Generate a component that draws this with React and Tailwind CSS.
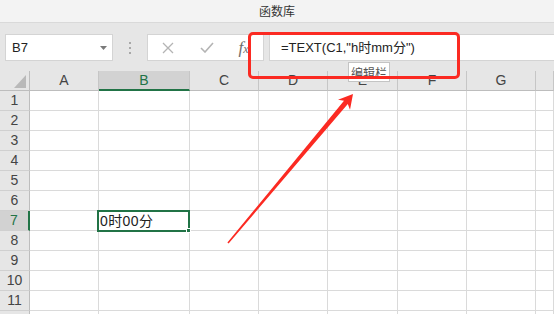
const cols = [
  { name: "A", w: "w-[69px]" },
  { name: "B", w: "w-[91px]" },
  { name: "C", w: "w-[69px]" },
  { name: "D", w: "w-[69px]" },
  { name: "E", w: "w-[70px]" },
  { name: "F", w: "w-[69px]" },
  { name: "G", w: "w-[69px]" },
  { name: "", w: "flex-1" },
];

const rows = [1, 2, 3, 4, 5, 6, 7, 8, 9, 10, 11];

const font = "font-['Liberation_Sans','Noto_Sans_CJK_SC',sans-serif]";

function Toolbar() {
  return (
    <div className="h-[48px] bg-[#e6e6e6] flex items-start pt-[11px] pl-[5px]">
      {/* name box */}
      <div className="w-[108px] h-[27px] bg-white border border-[#d4d4d4] flex items-center justify-between pl-[6px] pr-[5px]">
        <span className="text-[13px] text-[#222]">B7</span>
        <svg width="7" height="4" viewBox="0 0 7 4">
          <path d="M0 0 L7 0 L3.5 4 Z" fill="#7a7a7a" />
        </svg>
      </div>
      <div className="w-[34px] h-[27px] flex flex-col items-center justify-center gap-[3px]">
        <div className="w-[2px] h-[2px] bg-[#a8a8a8]" />
        <div className="w-[2px] h-[2px] bg-[#a8a8a8]" />
        <div className="w-[2px] h-[2px] bg-[#a8a8a8]" />
      </div>
      {/* cancel / enter / fx */}
      <div className="w-[117px] h-[27px] bg-white border border-[#d4d4d4] flex items-center">
        <div className="w-[40px] flex justify-center">
          <svg width="12" height="12" viewBox="0 0 12 12">
            <path d="M1 1 L11 11 M11 1 L1 11" stroke="#b4b4b4" strokeWidth="1.3" />
          </svg>
        </div>
        <div className="w-[38px] flex justify-center">
          <svg width="14" height="11" viewBox="0 0 14 11">
            <path d="M1 6 L5 10 L13 1" stroke="#b4b4b4" strokeWidth="1.6" fill="none" />
          </svg>
        </div>
        <div className="flex-1 flex justify-center pr-[2px]">
          <span className="font-['Liberation_Serif',serif] italic text-[17px] text-[#6e6e6e] leading-none">
            f<span className="text-[12px]">x</span>
          </span>
        </div>
      </div>
      {/* formula input */}
      <div className="ml-[5px] flex-1 h-[27px] bg-white border border-r-0 border-[#d4d4d4] flex items-center pl-[11px]">
        <span className="text-[13px] text-[#222]">=TEXT(C1,"h时mm分")</span>
      </div>
    </div>
  );
}

function HeaderRow() {
  return (
    <div className="flex h-[20px]">
      <div className="w-[30px] shrink-0 bg-[#e6e6e6] border-r border-b border-[#bdbdbd] flex items-end justify-end pr-[3px] pb-[2px]">
        <svg width="12" height="13" viewBox="0 0 12 13">
          <path d="M12 0 L12 13 L0 13 Z" fill="#b9b9b9" />
        </svg>
      </div>
      {cols.map((c) => {
        const sel = c.name === "B";
        return (
          <div
            key={c.name || "h"}
            className={
              c.w +
              " shrink-0 border-r border-[#c6c6c6] flex items-center justify-center text-[14px] " +
              (sel
                ? "bg-[#d2d2d2] text-[#217346] border-b-2 border-b-[#217346]"
                : "bg-[#e6e6e6] text-[#444] border-b border-b-[#bdbdbd]")
            }
          >
            {c.name}
          </div>
        );
      })}
    </div>
  );
}

function Row({ n }) {
  const sel = n === 7;
  return (
    <div className="flex h-[20px]">
      <div
        className={
          "w-[30px] shrink-0 border-b border-[#d0d0d0] flex items-center justify-center text-[14px] " +
          (sel
            ? "bg-[#d2d2d2] text-[#217346] border-r-2 border-r-[#217346]"
            : "bg-[#e6e6e6] text-[#444] border-r border-r-[#bdbdbd]")
        }
      >
        {n}
      </div>
      {cols.map((c) => (
        <div
          key={c.name || "h"}
          className={c.w + " shrink-0 bg-white border-r border-b border-[#dadada] relative"}
        >
          {sel && c.name === "B" && (
            <div className="absolute -left-[2px] -top-[1px] w-[93px] h-[22px] border-2 border-[#217346] z-10 flex items-center pl-[1px]">
              <span className="text-[14px] tracking-[0.4px] text-[#222]">0时00分</span>
              <div className="absolute -right-[3px] -bottom-[3px] w-[5px] h-[5px] bg-[#217346] border border-white" />
            </div>
          )}
        </div>
      ))}
    </div>
  );
}

export default function App() {
  return (
    <div className={"relative w-[554px] h-[314px] overflow-hidden bg-white " + font}>
      <div className="h-[23px] bg-[#f3f3f3] border-b border-[#d9d9d9] flex items-center justify-center">
        <span className="text-[12px] text-[#333] pt-[2px]">函数库</span>
      </div>
      <Toolbar />
      <HeaderRow />
      {rows.map((n) => (
        <Row key={n} n={n} />
      ))}
      {/* partly visible last row */}
      <div className="flex h-[20px]">
        <div className="w-[30px] shrink-0 bg-[#e6e6e6] border-r border-[#bdbdbd]" />
        {cols.map((c) => (
          <div key={c.name || "h"} className={c.w + " shrink-0 bg-white border-r border-[#dadada]"} />
        ))}
      </div>

      {/* tooltip */}
      <div className="absolute left-[348px] top-[62px] w-[42px] h-[20px] bg-white border border-[#c4c4c4] flex items-center justify-center pt-[3px] z-20">
        <span className="text-[12px] text-[#555]">编辑栏</span>
      </div>

      {/* annotation: red box */}
      <div className="absolute left-[248px] top-[32px] w-[212px] h-[47px] border-[3px] border-[#fb2a22] rounded-[5px] z-30" />

      {/* annotation: arrow */}
      <svg className="absolute left-0 top-0 z-30 pointer-events-none" width="554" height="314" viewBox="0 0 554 314">
        <polygon
          points="227.4,242.5 344,100.8 338,99.8 353,94 350,109.7 347.8,104 228.6,243.5"
          fill="#fb2a22"
        />
      </svg>
    </div>
  );
}
